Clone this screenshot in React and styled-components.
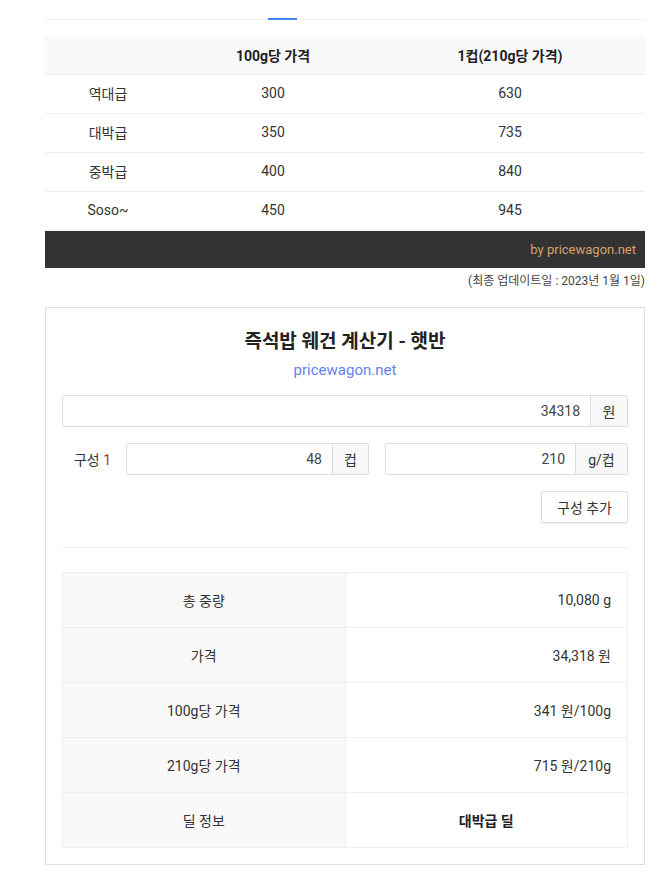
import React from 'react';
import styled, { createGlobalStyle } from 'styled-components';

const GlobalStyle = createGlobalStyle`
  body {
    margin: 0;
    background: #fff;
    font-family: Roboto, "Noto Sans CJK KR", sans-serif;
    color: #333;
  }
`;

const Page = styled.div`
  padding: 0 16px 12px 45px;
`;

const TabBar = styled.div`
  display: flex;
  align-items: flex-end;
  height: 19px;
  border-bottom: 1px solid #eee;
`;

const TabMark = styled.div`
  width: 29px;
  margin-left: 223px;
  margin-bottom: -1px;
  border-bottom: 2px solid #4285f4;
`;

const PriceTable = styled.table`
  width: 100%;
  margin-top: 16px;
  border-collapse: collapse;
  font-size: 14px;
  color: #333;

  th, td {
    text-align: center;
    height: 36px;
    padding: 0 0 2px;
    border-bottom: 1px solid #eee;
  }
  th {
    background: #f9f9f9;
    font-weight: bold;
    color: #222;
    padding: 1px 0 1px;
  }
`;

const Credit = styled.div`
  background: #333;
  height: 37px;
  display: flex;
  align-items: center;
  justify-content: flex-end;
  padding-right: 9px;
  font-size: 13px;
  color: #d4a26e;
`;

const Updated = styled.div`
  text-align: right;
  font-size: 12px;
  color: #444;
  margin-top: 3px;
`;

const Card = styled.section`
  margin-top: 19px;
  border: 1px solid #ddd;
  padding: 17px 16px 16px;
`;

const Title = styled.h2`
  margin: 2px 0 0;
  text-align: center;
  font-size: 19px;
  font-weight: bold;
  color: #222;
  line-height: 30px;
`;

const SiteLink = styled.div`
  text-align: center;
  font-size: 15px;
  color: #6680ee;
  margin-top: 4px;
`;

const InputGroup = styled.div`
  display: flex;
  height: 32px;
  border: 1px solid #ddd;
  border-radius: 2px;
  box-sizing: border-box;
  flex: ${p => (p.$grow ? 1 : 'none')};
  margin-top: ${p => p.$top || 0}px;
`;

const Field = styled.div`
  flex: 1;
  display: flex;
  align-items: center;
  justify-content: flex-end;
  padding-right: 10px;
  font-size: 14px;
  color: #444;
`;

const Addon = styled.div`
  width: ${p => p.$w}px;
  display: flex;
  align-items: center;
  justify-content: center;
  background: #f8f8f8;
  border-left: 1px solid #ddd;
  font-size: 14px;
  color: #333;
`;

const ComboRow = styled.div`
  display: flex;
  align-items: center;
  gap: 16px;
  margin-top: 16px;
`;

const ComboLabel = styled.div`
  width: 49px;
  margin-right: -1px;
  text-align: right;
  font-size: 14px;
  color: #333;
`;

const ComboIndex = styled.span`
  color: #a33;
`;

const Actions = styled.div`
  display: flex;
  justify-content: flex-end;
  margin-top: 16px;
`;

const AddButton = styled.button`
  height: 32px;
  width: 87px;
  background: #fff;
  border: 1px solid #ddd;
  border-radius: 2px;
  box-shadow: 0 1px 1px rgba(0, 0, 0, 0.05);
  font-family: inherit;
  font-size: 14px;
  color: #333;
`;

const Divider = styled.hr`
  border: none;
  border-top: 1px solid #eee;
  margin: 24px 0 24px;
`;

const ResultTable = styled.table`
  width: 100%;
  border-collapse: collapse;
  font-size: 14px;
  color: #333;

  td {
    height: 54px;
    border: 1px solid #eee;
    padding: 0 16px;
  }
`;

const KeyCell = styled.td`
  width: 50%;
  background: #f9f9f9;
  text-align: center;
`;

const ValueCell = styled.td`
  text-align: ${p => (p.$strong ? 'center' : 'right')};
  font-weight: ${p => (p.$strong ? 'bold' : 'normal')};
  color: ${p => (p.$strong ? '#222' : '#333')};
`;

const prices = [
  ['역대급', '300', '630'],
  ['대박급', '350', '735'],
  ['중박급', '400', '840'],
  ['Soso~', '450', '945'],
];

const results = [
  ['총 중량', '10,080 g'],
  ['가격', '34,318 원'],
  ['100g당 가격', '341 원/100g'],
  ['210g당 가격', '715 원/210g'],
];

const App = () => {
  return (
    <Page>
      <GlobalStyle />
      <TabBar>
        <TabMark />
      </TabBar>

      <PriceTable>
        <colgroup>
          <col style={{ width: '21%' }} />
          <col style={{ width: '34%' }} />
          <col />
        </colgroup>
        <thead>
          <tr>
            <th></th>
            <th>100g당 가격</th>
            <th>1컵(210g당 가격)</th>
          </tr>
        </thead>
        <tbody>
          {prices.map(row => (
            <tr key={row[0]}>
              {row.map((c, i) => <td key={i}>{c}</td>)}
            </tr>
          ))}
        </tbody>
      </PriceTable>
      <Credit>by pricewagon.net</Credit>
      <Updated>(최종 업데이트일 : 2023년 1월 1일)</Updated>

      <Card>
        <Title>즉석밥 웨건 계산기 - 햇반</Title>
        <SiteLink>pricewagon.net</SiteLink>

        <InputGroup $top={16}>
          <Field>34318</Field>
          <Addon $w={36}>원</Addon>
        </InputGroup>

        <ComboRow>
          <ComboLabel>구성 <ComboIndex>1</ComboIndex></ComboLabel>
          <InputGroup $grow>
            <Field>48</Field>
            <Addon $w={35}>컵</Addon>
          </InputGroup>
          <InputGroup $grow>
            <Field>210</Field>
            <Addon $w={51}>g/컵</Addon>
          </InputGroup>
        </ComboRow>

        <Actions>
          <AddButton>구성 추가</AddButton>
        </Actions>

        <Divider />

        <ResultTable>
          <tbody>
            {results.map(([k, v]) => (
              <tr key={k}>
                <KeyCell>{k}</KeyCell>
                <ValueCell>{v}</ValueCell>
              </tr>
            ))}
            <tr>
              <KeyCell>딜 정보</KeyCell>
              <ValueCell $strong>대박급 딜</ValueCell>
            </tr>
          </tbody>
        </ResultTable>
      </Card>
    </Page>
  );
};

export default App;
